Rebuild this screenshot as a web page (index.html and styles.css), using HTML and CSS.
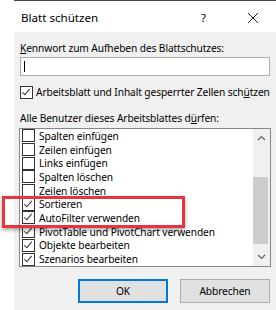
FILE: index.html
```html
<!DOCTYPE html>
<html lang="de">
<head>
    <meta charset="UTF-8">
    <title>Blatt schützen</title>
    <link rel="stylesheet" href="styles.css">
</head>
<body>
    <div class="grid-edge"></div>
    <div class="titlebar">
        <span class="title">Blatt schützen</span>
        <span class="help">?</span>
        <svg class="close" width="12" height="12" viewBox="0 0 12 12">
            <path d="M1 1 L11 11 M11 1 L1 11" stroke="#222" stroke-width="1" fill="none"/>
        </svg>
    </div>
    <div class="dialog">
        <div class="label"><u>K</u>ennwort zum Aufheben des Blattschutzes:</div>
        <div class="pwd"><span class="caret"></span></div>
        <div class="check-row">
            <span class="box checked"></span>
            <span>Arbeitsblatt und Inhalt gesperrter Zellen sch<u>ü</u>tzen</span>
        </div>
        <div class="label second">Alle Benutzer dieses Arbeitsblattes d<u>ü</u>rfen:</div>
        <div class="list">
            <div class="items">
                <div class="item"><span class="box"></span>Spalten einfügen</div>
                <div class="item"><span class="box"></span>Zeilen einfügen</div>
                <div class="item"><span class="box"></span>Links einfügen</div>
                <div class="item"><span class="box"></span>Spalten löschen</div>
                <div class="item"><span class="box"></span>Zeilen löschen</div>
                <div class="item"><span class="box checked"></span>Sortieren</div>
                <div class="item"><span class="box checked"></span>AutoFilter verwenden</div>
                <div class="item"><span class="box checked"></span>PivotTable und PivotChart verwenden</div>
                <div class="item"><span class="box checked"></span>Objekte bearbeiten</div>
                <div class="item"><span class="box checked"></span>Szenarios bearbeiten</div>
            </div>
            <div class="scrollbar">
                <svg class="arrow" width="9" height="6" viewBox="0 0 9 6">
                    <path d="M1 5 L4.5 1.5 L8 5" stroke="#606060" stroke-width="1.2" fill="none"/>
                </svg>
                <div class="thumb"></div>
                <svg class="arrow" width="9" height="6" viewBox="0 0 9 6">
                    <path d="M1 1 L4.5 4.5 L8 1" stroke="#606060" stroke-width="1.2" fill="none"/>
                </svg>
            </div>
        </div>
        <div class="buttons">
            <button class="btn default">OK</button>
            <button class="btn">Abbrechen</button>
        </div>
    </div>
    <div class="highlight"></div>
</body>
</html>
```

FILE: styles.css
```css
body {
    margin: 0;
    width: 276px;
    height: 310px;
    overflow: hidden;
    background: white;
    font-family: "Noto Sans", "Liberation Sans", sans-serif;
    font-size: 10.2px;
    letter-spacing: -0.1px;
    color: #000;
    position: relative;
}

.grid-edge {
    height: 3px;
    margin-left: 14px;
    border-top: 1px solid #444;
    box-sizing: border-box;
}

.titlebar {
    height: 29px;
    display: flex;
    align-items: center;
    padding-left: 21px;
    font-size: 11.6px;
    letter-spacing: 0;
}

.title {
    flex: 1;
}

.help {
    width: 12px;
    margin-right: 34px;
}

.close {
    margin-right: 17px;
}

.dialog {
    margin-left: 14px;
    height: 278px;
    background: #f0f0f0;
    padding: 9px 5px 0 5px;
    box-sizing: border-box;
}

.label {
    height: 14px;
    line-height: 14px;
    padding-left: 1px;
    white-space: nowrap;
}

.second {
    margin-top: 12px;
}

.pwd {
    margin: 2px 1px 0 1px;
    height: 19px;
    background: white;
    border: 1px solid #adadad;
    box-sizing: border-box;
    display: flex;
    align-items: center;
    padding-left: 3px;
}

.caret {
    width: 1px;
    height: 11px;
    background: #000;
}

.check-row {
    display: flex;
    align-items: center;
    gap: 3px;
    margin-top: 9px;
    padding-left: 1px;
    height: 14px;
    white-space: nowrap;
}

.box {
    width: 13px;
    height: 13px;
    border: 1px solid #333;
    box-sizing: border-box;
    background: white;
    position: relative;
    flex: none;
}

.box.checked::after {
    content: "";
    position: absolute;
    left: 3px;
    top: 0px;
    width: 3px;
    height: 7px;
    border-right: 1px solid #333;
    border-bottom: 1px solid #333;
    transform: rotate(40deg);
}

.list {
    margin-top: 3px;
    height: 139px;
    border: 1px solid #828790;
    background: white;
    display: flex;
    box-sizing: border-box;
}

.items {
    flex: 1;
    padding-left: 2px;
}

.item {
    height: 13.7px;
    display: flex;
    align-items: center;
    gap: 4px;
    white-space: nowrap;
}

.scrollbar {
    width: 17px;
    background: #f0f0f0;
    display: flex;
    flex-direction: column;
    align-items: center;
}

.arrow {
    margin: 6px 0;
}

.thumb {
    width: 15px;
    height: 67px;
    background: #cdcdcd;
    margin-top: 30px;
    margin-bottom: auto;
    margin-left: -2px;
}

.buttons {
    display: flex;
    justify-content: flex-end;
    gap: 12px;
    margin-top: 12px;
    padding-right: 1px;
}

.btn {
    width: 90px;
    height: 24px;
    font-family: "Noto Sans", "Liberation Sans", sans-serif;
    font-size: 10.2px;
    letter-spacing: -0.1px;
    background: #e1e1e1;
    border: 1px solid #adadad;
    padding: 0;
    color: #000;
}

.btn.default {
    border: 2px solid #0078d7;
}

.highlight {
    position: absolute;
    left: 2px;
    top: 196px;
    width: 183px;
    height: 32px;
    border: 3px solid #e8343d;
    box-sizing: border-box;
    box-shadow: 0 2px 4px rgba(0, 0, 0, 0.35);
}
```
